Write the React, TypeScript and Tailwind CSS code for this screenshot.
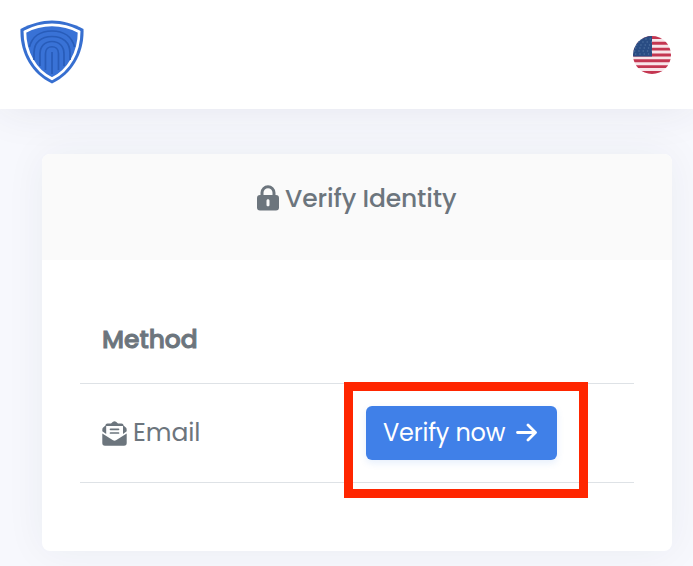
const font = "font-['Poppins','Inter',sans-serif]";

function ShieldLogo() {
  return (
    <svg className="h-[64px] w-[64px]" viewBox="0 0 64 64" fill="none">
      <path d="M32 .5C42 .5 53 3.500 63.500 9 64.500 32 53 53.500 32 63.500 11 53.500-.5 32 .5 9 11 3.500 22 .5 32 .5Z" fill="#376fd0" />
      <path d="M32 4.900C41.500 4.900 51 7.400 59.100 11.700 59.100 31.500 49.500 50 32 58.800 14.500 50 4.900 31.500 4.900 11.700 13 7.400 22.500 4.900 32 4.900Z" fill="#3972d6" stroke="#fff" strokeWidth="2.700" />
      <g stroke="#285cb9" strokeWidth="1.700">
        <path d="M9.500 27C12 17 20 11 32 11S52 17 54.500 27" />
        <path d="M14 40V33C14 22 21.500 16.500 32 16.500S50 22 50 33V40" />
        <path d="M20 46V34C20 26 25 21.500 32 21.500S44 26 44 34V46" />
        <path d="M25.500 50V33.500C25.500 24.500 38.500 24.500 38.500 33.500V50" />
        <path d="M32 32V54" />
      </g>
    </svg>
  );
}

function Flag() {
  return (
    <svg className="h-[38px] w-[38px] rounded-full" viewBox="0 0 38 38">
      <path fill="#f8e5e9" d="M0 0h38v38H0z" />
      <path stroke="#c43651" strokeWidth="2.920" d="M0 1.460h38M0 7.300h38M0 13.140h38M0 18.980h38M0 24.820h38M0 30.660h38M0 36.500h38" />
      <path fill="#294c83" d="M0 0h19v20.500H0z" />
      <path stroke="#496b9c" strokeWidth="1.300" strokeDasharray="1.300 3" d="M8 3h11M5 6h14M3 9h16M2 12h17M1 15h18M2 18h17" />
    </svg>
  );
}

function LockIcon() {
  return (
    <svg className="h-[26px] w-[22px]" viewBox="0 0 22 26">
      <path d="M5 12V7.700a6 6 0 0 1 12 0V12" fill="none" stroke="#6c757d" strokeWidth="3" />
      <path fillRule="evenodd" fill="#6c757d" d="M3 10h16a3 3 0 0 1 3 3v9.500a3 3 0 0 1-3 3H3a3 3 0 0 1-3-3V13a3 3 0 0 1 3-3Zm8 4.200c-1 0-1.500.6-1.500 1.500v4c0 1 .5 1.500 1.500 1.500s1.500-.5 1.500-1.500v-4c0-.9-.5-1.500-1.500-1.500Z" />
    </svg>
  );
}

function MailIcon() {
  return (
    <svg className="h-[25px] w-[25px]" viewBox="0 0 25 25">
      <path fill="#6c757d" d="M.3 12.500 11 19.300c1 .6 2 .6 3 0l10.700-6.800V22a2.700 2.700 0 0 1-2.700 2.700H3A2.700 2.700 0 0 1 .3 22Z" />
      <path fill="#6c757d" d="M3.500 4.500.9 6.800c-.5.500-.6 1-.6 3.400L4.200 13V5H21v8l3.700-2.800c0-2.400-.1-2.900-.6-3.400L21.500 4.500C21.500 3.300 20.700 2.500 19.500 2.500H16L14 .8c-1-.7-2-.7-3 0L9 2.500H5.500c-1.200 0-2 .8-2 2Z" />
      <path d="M8.500 8.300h8M8.500 12h8" fill="none" stroke="#6c757d" strokeWidth="1.700" strokeLinecap="round" />
    </svg>
  );
}

export default function App() {
  return (
    <div className={`relative h-[566px] w-full overflow-hidden bg-[#f7f8fd] ${font}`}>
      <header className="relative flex h-[109px] items-start justify-between bg-white pl-[20px] pr-[22px] shadow-[0_0_45px_rgba(40,48,75,0.09)]">
        <div className="pt-[20px]"><ShieldLogo /></div>
        <div className="pt-[36px]"><Flag /></div>
      </header>
      <main className="ml-[42px] mt-[45px] h-[397px] w-[630px] overflow-hidden rounded-[8px] bg-white shadow-[0_0_40px_rgba(40,48,75,0.06)]">
        <div className="flex h-[106px] items-start bg-[#fafafa] pl-[215px] pt-[31px]">
          <LockIcon />
          <h1 className="ml-[6px] whitespace-nowrap text-[25px] font-medium leading-[28px] tracking-[-0.130px] text-[#6c757d]">Verify Identity</h1>
        </div>
        <div className="mx-[38px] pt-[36px] text-[#6c757d]">
          <div className="flex h-[88px] items-center border-b border-[#dee2e6] pl-[22px]">
            <span className="text-[25px] font-medium leading-[30px] tracking-[-0.050px] [-webkit-text-stroke:0.9px_#6c757d]">Method</span>
          </div>
          <div className="flex h-[99px] items-center border-b border-[#dee2e6] pl-[22px]">
            <div className="flex w-[264px] items-center">
              <MailIcon />
              <span className="ml-[6px] text-[25px] leading-[30px] tracking-[-0.100px]">Email</span>
            </div>
            <button className="flex h-[54px] w-[191px] items-center rounded-[6px] bg-[#4080e8] pl-[17px] text-white shadow-[0_3px_7px_rgba(64,128,232,0.13)]">
              <span className="whitespace-nowrap text-[24px] leading-[30px] tracking-[-0.200px]">Verify now</span>
              <svg className="ml-[11px] h-[20px] w-[21px] shrink-0" viewBox="0 0 21 20" fill="none" stroke="currentColor" strokeWidth="2.800" strokeLinecap="round" strokeLinejoin="round">
                <path d="M1.500 9.500h17.500M12 2 19.500 9.500 12 17" />
              </svg>
            </button>
          </div>
        </div>
      </main>
      <div className="absolute left-[344px] top-[382px] h-[116px] w-[244px] border-[9px] border-[#ff2600]" />
    </div>
  );
}
